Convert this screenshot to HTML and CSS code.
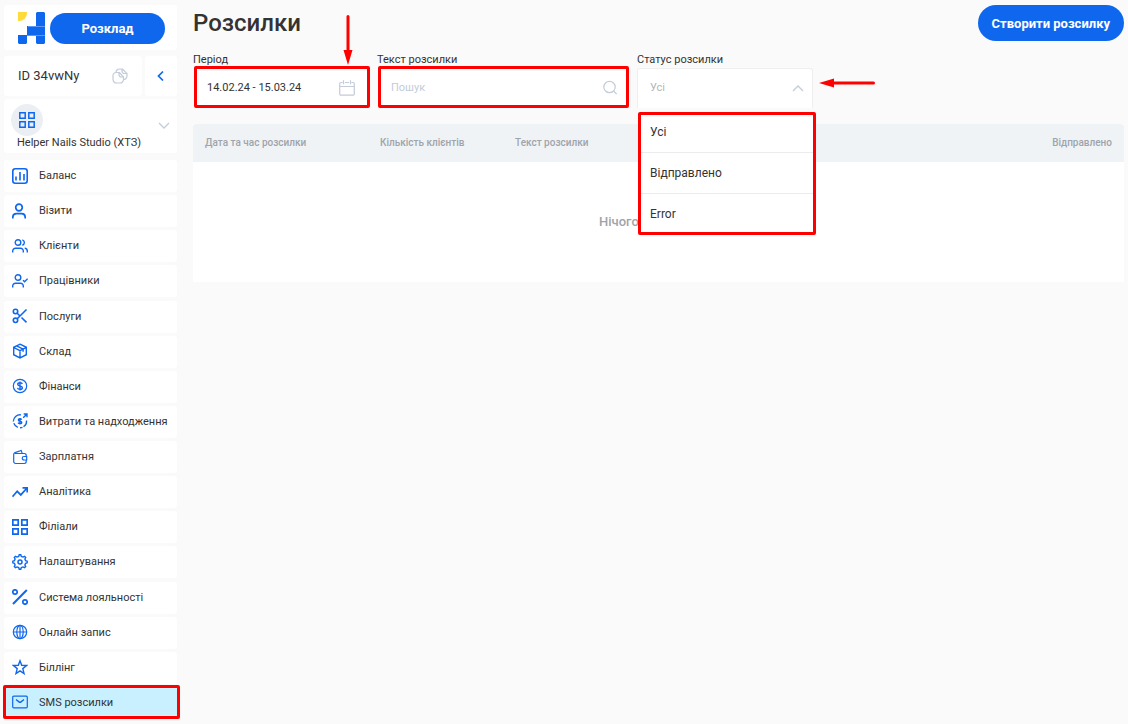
FILE: index.html
```html
<!DOCTYPE html>
<html lang="uk">

<head>
    <meta charset="UTF-8">
    <meta name="viewport" content="width=device-width, initial-scale=1.0">
    <title>Розсилки</title>
    <link rel="stylesheet" href="styles.css">
</head>

<body>
    <aside class="sidebar">
        <div class="card brand">
            <svg class="logo" viewBox="0 0 27 32">
                <path fill="#ffdb3a" d="M0 0h9v1a8 8 0 0 1-8 8H0z" />
                <path fill="#0f67ee" d="M18 1l1-1h7l1 1v30l-1 1h-7l-1-1v-8H9v-9h9zM0 23h9v8l-1 1H1l-1-1z" />
                <path stroke="#5c98f5" d="M10 14.5h17M9 23.5h18" />
            </svg>
            <a class="schedule" href="#">Розклад</a>
        </div>

        <div class="account">
            <div class="card account-id">
                <span>ID 34vwNy</span>
                <button class="icon-button" aria-label="Копіювати ID">
                    <svg class="icon muted" viewBox="0 0 16 16">
                        <path d="M4 4.500A3.500 3.500 0 0 1 7.500 1h3L15 5.500V8a3.500 3.500 0 0 1-3.500 3.500M10 1v2a2.500 2.500 0 0 0 2.500 2.500H15M4 4.500h3.500L11.500 9v2.500A3.500 3.500 0 0 1 8 15H4.500A3.500 3.500 0 0 1 1 11.500V7.500a3 3 0 0 1 3-3zM7 4.500v2A2.500 2.500 0 0 0 9.500 9h2" />
                    </svg>
                </button>
            </div>
            <button class="card collapse" aria-label="Згорнути меню">
                <svg class="icon" viewBox="0 0 16 16"><path stroke-width="1.700" d="M10 3.500L5.500 8l4.500 4.500" /></svg>
            </button>
        </div>

        <button class="card branch">
            <span class="branch-info">
                <span class="branch-icon">
                    <svg class="icon" viewBox="0 0 16 16"><path stroke-width="1.500" d="M.8 .8h5.400v5.400H.8zM9.800 .8h5.400v5.400H9.800zM.8 9.800h5.400v5.400H.8zM9.800 9.800h5.400v5.400H9.800z" /></svg>
                </span>
                <span class="branch-name">Helper Nails Studio (ХТЗ)</span>
            </span>
            <svg class="chevron" viewBox="0 0 12 8"><path d="M1 1l5 5 5-5" /></svg>
        </button>

        <nav class="menu">
            <a class="card menu-item" href="#">
                <svg class="icon" viewBox="0 0 16 16"><rect x=".8" y=".8" width="14.400" height="14.400" rx="2.500" stroke-width="1.600" /><path stroke-width="1.600" d="M4 12.500V8.500M8 12.500V4M12 12.500V6" /></svg>
                Баланс
            </a>
            <a class="card menu-item" href="#">
                <svg class="icon" viewBox="0 0 16 16"><circle cx="7" cy="4.500" r="3.300" stroke-width="1.700" /><path stroke-width="1.700" d="M.8 15.500V14A3.500 3.500 0 0 1 4.300 10.700h5.400A3.500 3.500 0 0 1 13.200 14v1.500" /></svg>
                Візити
            </a>
            <a class="card menu-item" href="#">
                <svg class="icon" viewBox="0 0 16 16"><circle cx="6" cy="4.500" r="2.800" /><path d="M.7 14.500V13a2.800 2.800 0 0 1 2.800-2.800h5A2.800 2.800 0 0 1 11.300 13v1.500M10.300 1.800a2.800 2.800 0 0 1 0 5.400M12.700 10.300a2.800 2.800 0 0 1 2.600 2.700v1.500" /></svg>
                Клієнти
            </a>
            <a class="card menu-item" href="#">
                <svg class="icon" viewBox="0 0 16 16"><circle cx="6" cy="4.500" r="2.800" /><path d="M.7 14.500V13a2.800 2.800 0 0 1 2.800-2.800h5A2.800 2.800 0 0 1 11.300 13v1.500M11 7.200l1.600 1.600 3-3.100" /></svg>
                Працівники
            </a>
            <a class="card menu-item" href="#">
                <svg class="icon" viewBox="0 0 16 16"><circle cx="3.500" cy="3.500" r="2.200" stroke-width="1.600" /><circle cx="3.500" cy="12.300" r="2.200" stroke-width="1.600" /><path stroke-width="1.600" d="M14.500 1.500L5.200 10.700M9.500 9.500l5 4.900M5.200 5.200L8 8" /></svg>
                Послуги
            </a>
            <a class="card menu-item" href="#">
                <svg class="icon" viewBox="0 0 16 16"><path d="M8 1.200l6.300 3.100v7.400L8 14.900l-6.300-3.200V4.300zM1.700 4.500L8 7.700l6.300-3.200M8 7.700v7M4.700 2.900l6.400 3.300v2.600" /></svg>
                Склад
            </a>
            <a class="card menu-item" href="#">
                <svg class="icon" viewBox="0 0 16 16"><circle cx="8" cy="8" r="6.700" stroke-width="1.200" /><path d="M10.300 6c-.2-.9-1.100-1.300-2.300-1.300S5.700 5.300 5.700 6.300 6.600 7.700 8 8s2.400.7 2.400 1.700-1 1.700-2.400 1.700S5.700 10.800 5.500 9.900M8 3.500v9" /></svg>
                Фінанси
            </a>
            <a class="card menu-item" href="#">
                <svg class="icon" viewBox="0 0 16 16"><path d="M10.500 14.300A6.700 6.700 0 0 1 8 14.700M5.800 14.300a6.700 6.700 0 0 1-4-4M1.300 8.500A6.700 6.700 0 0 1 9 1.900M14.500 7.500a6.700 6.700 0 0 1-3 6.200M9.600 6.700C9.300 6 8.700 5.800 8 5.800c-.9 0-1.700.3-1.700 1.100S7 8 8 8.200s1.800.4 1.800 1.200-.8 1.200-1.800 1.200-1.600-.3-1.900-1M8 4.900v6.600M11.200 4.800L14.700 1.300M11.700 1h3.300v3.300" /></svg>
                Витрати та надходження
            </a>
            <a class="card menu-item" href="#">
                <svg class="icon" viewBox="0 0 16 16"><path stroke-width="1.200" d="M3 4.500h9.500a1.700 1.700 0 0 1 1.700 1.700v1.300M14.200 11v1.600a1.900 1.900 0 0 1-1.900 1.900H3.600a1.900 1.900 0 0 1-1.900-1.900V5.500A2 2 0 0 1 3 3.600l6.200-2.200 1 3M12 7.500h2.700V11H12a1.750 1.750 0 0 1 0-3.500z" /></svg>
                Зарплатня
            </a>
            <a class="card menu-item" href="#">
                <svg class="icon" viewBox="0 0 16 16"><path stroke-width="1.700" d="M.5 12.700l4.700-5.400 3.600 3.600 6-6.700M10.500 3.800h4.700v4.700" /></svg>
                Аналітика
            </a>
            <a class="card menu-item" href="#">
                <svg class="icon" viewBox="0 0 16 16"><path stroke-width="1.700" d="M.8 .8h5.400v5.400H.8zM9.800 .8h5.400v5.400H9.800zM.8 9.800h5.400v5.400H.8zM9.800 9.800h5.400v5.400H9.800z" /></svg>
                Філіали
            </a>
            <a class="card menu-item" href="#">
                <svg class="icon" viewBox="0 0 16 16"><circle cx="8" cy="8" r="2" stroke-width="1.500" /><path d="M6.700 2.400L7.200.8h1.600l.5 1.600 1.700.7 1.500-.8 1.200 1.200-.8 1.500.7 1.700 1.600.5v1.600l-1.600.5-.7 1.700.8 1.500-1.200 1.200-1.500-.8-1.700.7-.5 1.600H7.200l-.5-1.600-1.700-.7-1.500.8-1.200-1.200.8-1.500-.7-1.700L.8 8.800V7.200l1.600-.5L3.100 5l-.8-1.500 1.200-1.200 1.500.8z" /></svg>
                Налаштування
            </a>
            <a class="card menu-item" href="#">
                <svg class="icon" viewBox="0 0 16 16"><path stroke-width="2" d="M14.800 1L1 15" /><circle cx="3" cy="3" r="2.200" stroke-width="1.700" /><circle cx="13" cy="13" r="2.200" stroke-width="1.700" /></svg>
                Система лояльності
            </a>
            <a class="card menu-item" href="#">
                <svg class="icon" viewBox="0 0 16 16"><g stroke-width="1.200"><circle cx="8" cy="8" r="6.700" /><ellipse cx="8" cy="8" rx="3.200" ry="6.700" /><path d="M1.300 8h13.400M8 1.300v13.400" /></g></svg>
                Онлайн запис
            </a>
            <a class="card menu-item" href="#">
                <svg class="icon" viewBox="0 0 16 16"><path d="M8 1.800l1.700 4.500 4.800.2-3.700 3.100 1.200 4.900L8 11.800l-4 2.700 1.200-4.900-3.700-3.100 4.800-.2z" /></svg>
                Біллінг
            </a>
            <a class="card menu-item active marked" href="#">
                <svg class="icon" viewBox="0 0 16 16"><rect x=".7" y="2.200" width="14.600" height="11.600" rx="1" stroke-width="1.200" /><path d="M4 5.500l3 2.400a1.600 1.600 0 0 0 2 0l3-2.400" /></svg>
                SMS розсилки
            </a>
        </nav>
    </aside>

    <main class="content">
        <header class="page-header">
            <h1>Розсилки</h1>
            <button class="create">Створити розсилку</button>
        </header>

        <form class="filters">
            <div class="filter">
                <label for="period">Період</label>
                <div class="field marked">
                    <input id="period" type="text" value="14.02.24 - 15.03.24">
                    <svg class="icon muted" viewBox="0 0 16 16"><path d="M3.500 2.500H2a1.300 1.300 0 0 0-1.300 1.300v10A1.300 1.300 0 0 0 2 15.200h12a1.300 1.300 0 0 0 1.300-1.400v-10A1.300 1.300 0 0 0 14 2.500h-1.500M6 2.500h4M.7 6.500h14.600M4.500.3v4M11.500.3v4" /></svg>
                </div>
                <svg class="arrow arrow-down" viewBox="0 0 10 50"><path d="M3.500 1.500a1.500 1.500 0 0 1 3 0V35h3L5 50 .5 35h3z" /></svg>
            </div>
            <div class="filter filter-search">
                <label for="search">Текст розсилки</label>
                <div class="field marked">
                    <input id="search" type="text" placeholder="Пошук">
                    <svg class="icon muted" viewBox="0 0 16 16"><circle cx="7.500" cy="7" r="5.700" /><path d="M11.500 11l3.200 3.200" /></svg>
                </div>
            </div>
            <div class="filter">
                <label for="status">Статус розсилки</label>
                <div class="field field-open">
                    <select id="status">
                        <option>Усі</option>
                        <option>Відправлено</option>
                        <option>Error</option>
                    </select>
                    <svg class="chevron" viewBox="0 0 12 8"><path d="M1 7l5-5 5 5" /></svg>
                </div>
                <ul class="options marked">
                    <li>Усі</li>
                    <li>Відправлено</li>
                    <li>Error</li>
                </ul>
                <svg class="arrow arrow-left" viewBox="0 0 56 10"><path d="M54.500 3.500a1.500 1.500 0 0 1 0 3H15v3L0 5 15 .5v3z" /></svg>
            </div>
        </form>

        <table class="mailings">
            <thead>
                <tr>
                    <th class="col-date">Дата та час розсилки</th>
                    <th class="col-count">Кількість клієнтів</th>
                    <th>Текст розсилки</th>
                    <th class="col-sent">Відправлено</th>
                </tr>
            </thead>
            <tbody>
                <tr>
                    <td class="empty" colspan="4">Нічого не знайдено</td>
                </tr>
            </tbody>
        </table>
    </main>
</body>

</html>
```
FILE: styles.css
```css
* {
    box-sizing: border-box;
}

body {
    display: flex;
    min-height: 100vh;
    margin: 0;
    background: #fafafa;
    color: #333;
    font-family: Roboto, sans-serif;
    font-size: 11px;
}

button,
input,
select {
    font: inherit;
    color: inherit;
    border: 0;
    background: none;
    padding: 0;
}

button {
    cursor: pointer;
}

a {
    color: inherit;
    text-decoration: none;
}

.card {
    background: #fff;
    border-radius: 3px;
}

.icon {
    flex: none;
    width: 16px;
    height: 16px;
    fill: none;
    stroke: #0f67ee;
    stroke-width: 1.4;
}

.icon.muted {
    stroke: #c3ccd8;
    stroke-width: 1.2;
}

.chevron {
    flex: none;
    width: 12px;
    height: 8px;
    fill: none;
    stroke: #c3ccd8;
    stroke-width: 1.3;
}

/* red frame over a highlighted element */
.marked {
    position: relative;
}

.marked::after {
    content: "";
    position: absolute;
    inset: -2px -1px 0 1px;
    border: 3px solid #f00;
    border-radius: 2px;
    pointer-events: none;
}

/* sidebar */
.sidebar {
    display: flex;
    flex-direction: column;
    flex: none;
    width: 177px;
    padding: 5px 0 5px 4px;
}

.brand {
    display: flex;
    align-items: center;
    gap: 5px;
    height: 45px;
    padding: 1px 12px 0 14px;
    margin-bottom: 6px;
}

.logo {
    width: 27px;
    height: 32px;
}

.schedule {
    flex: 1;
    border-radius: 16px;
    background: #0f67ee;
    color: #fff;
    font-size: 13px;
    font-weight: bold;
    line-height: 31px;
    text-align: center;
}

.account {
    display: flex;
    gap: 3px;
    height: 40px;
    margin-bottom: 3px;
}

.account-id {
    display: flex;
    flex: 1;
    align-items: center;
    justify-content: space-between;
    padding: 0 14px 1px;
    font-size: 13px;
}

.icon-button {
    display: flex;
}

.collapse {
    display: flex;
    align-items: center;
    justify-content: center;
    width: 32px;
}

.branch {
    display: flex;
    align-items: center;
    justify-content: space-between;
    height: 54px;
    padding: 0 7px;
    margin-bottom: 7px;
    text-align: left;
}

.branch-info {
    display: flex;
    flex-direction: column;
}

.branch-icon {
    display: flex;
    align-items: center;
    justify-content: center;
    width: 32px;
    height: 32px;
    border-radius: 50%;
    background: #ebeff4;
}

.branch-name {
    padding-left: 6px;
    line-height: 13px;
}

.menu {
    display: flex;
    flex: 1;
    flex-direction: column;
    justify-content: space-between;
}

.menu-item {
    display: flex;
    align-items: center;
    gap: 11px;
    height: 32px;
    padding: 0 8px 1px;
    white-space: nowrap;
}

.menu-item.active {
    background: #c8f0ff;
}

.menu-item.marked::after {
    inset: -2px -3px 0 -1px;
}

/* content */
.content {
    flex: 1;
    min-width: 0;
    padding: 5px 4px 0 16px;
}

.page-header {
    display: flex;
    align-items: center;
    justify-content: space-between;
    margin-bottom: 10px;
}

h1 {
    margin: 0;
    font-size: 24px;
    font-weight: 500;
}

.create {
    height: 36px;
    padding: 0 14px;
    border-radius: 18px;
    background: #0f67ee;
    color: #fff;
    font-size: 13px;
    font-weight: bold;
}

.filters {
    display: flex;
    gap: 8px;
    margin-bottom: 16px;
}

.filter {
    position: relative;
    width: 176px;
}

.filter-search {
    width: 252px;
}

.filter label {
    display: block;
    line-height: 17px;
}

.field {
    display: flex;
    align-items: center;
    height: 40px;
    padding: 0 14px 1px;
    background: #fff;
}

.field input,
.field select {
    flex: 1;
    min-width: 0;
    outline: 0;
}

.field input::placeholder {
    color: #c3ccd8;
}

.field select {
    appearance: none;
    color: #b5b5b5;
}

.field-open {
    padding: 0 8px 2px 12px;
    border: 1px solid #efefef;
    border-bottom: 0;
    border-radius: 3px 3px 0 0;
}

.filter-search .field {
    padding-right: 11px;
}

.filter-search .field::after {
    right: 0;
}

.options {
    position: absolute;
    top: 61px;
    left: 1px;
    right: 0;
    margin: 0;
    padding: 0;
    background: #fff;
    list-style: none;
    font-size: 12px;
}

.options li {
    height: 41px;
    padding-left: 12px;
    border-bottom: 1px solid #ececec;
    line-height: 40px;
}

.options.marked {
    position: absolute;
}

.options.marked::after {
    inset: 0 -3px 0 0;
}

.arrow {
    position: absolute;
    fill: #f00;
}

.arrow-down {
    top: -36px;
    right: 16px;
    width: 10px;
    height: 50px;
}

.arrow-left {
    top: 27px;
    left: 182px;
    width: 56px;
    height: 10px;
}

.mailings {
    width: 100%;
    border-collapse: collapse;
    background: #fff;
}

.mailings th {
    height: 38px;
    padding: 0 12px 1px;
    background: #eff3f6;
    color: #a0a3ab;
    font-size: 10px;
    font-weight: 500;
    text-align: left;
}

.mailings th:first-child {
    border-radius: 3px 0 0 0;
}

.mailings th:last-child {
    border-radius: 0 3px 0 0;
}

.col-date {
    width: 175px;
}

.col-count {
    width: 135px;
}

.mailings .col-sent {
    text-align: right;
}

.empty {
    height: 120px;
    padding: 0 0 2px;
    color: #a0a3ab;
    font-size: 13px;
    font-weight: 500;
    text-align: center;
}
```
